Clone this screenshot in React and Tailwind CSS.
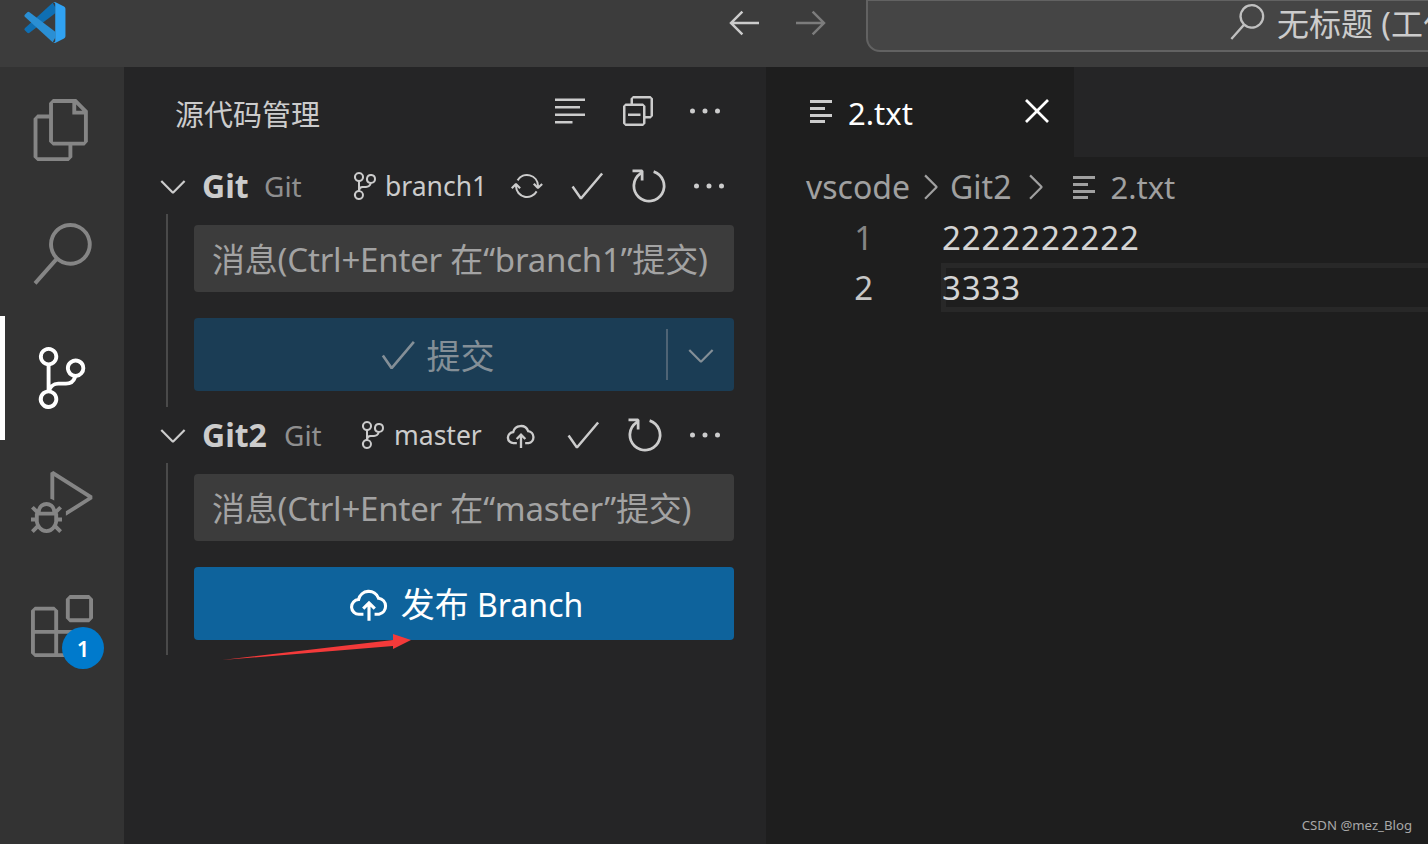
import React from 'react';

const paths = {
    check: 'M14.431 3.323l-8.47 10-.79-.036-3.35-4.77.818-.574 2.978 4.24 8.051-9.506.764.646z',
    chevronDown: 'M7.976 10.072l4.357-4.357.62.618L8.285 11h-.618L3 6.333l.619-.618 4.357 4.357z',
    chevronRight: 'M10.072 8.024L5.715 3.667l.618-.62L11 7.716v.618L6.333 13l-.618-.619 4.357-4.357z',
    close: 'M8 8.707l3.646 3.647.708-.707L8.707 8l3.647-3.646-.707-.708L8 7.293 4.354 3.646l-.707.708L7.293 8l-3.646 3.646.707.708L8 8.707z',
    dots: 'M4 8a1 1 0 1 1-2 0 1 1 0 0 1 2 0zm5 0a1 1 0 1 1-2 0 1 1 0 0 1 2 0zm5 0a1 1 0 1 1-2 0 1 1 0 0 1 2 0z',
    refresh: 'M4.681 3H2V2h3.5l.5.5V6H5V4a5 5 0 1 0 4.53-.761l.302-.954A6 6 0 1 1 4.681 3z',
    sync: 'M2.006 8.267L.78 9.5 0 8.73l2.09-2.07.76.01 2.09 2.12-.76.76-1.167-1.18a5 5 0 0 0 9.4 1.983l.813.597a6 6 0 0 1-11.22-2.683zm10.99-.466L11.76 6.55l-.76.76 2.09 2.11.76.01 2.09-2.07-.75-.76-1.194 1.18a6 6 0 0 0-11.11-2.92l.81.594a5 5 0 0 1 9.3 2.346z',
    branch: 'M13 4.5a2.5 2.5 0 1 0-3.21 2.4 2 2 0 0 1-1.79 1.1H6a2.5 2.5 0 0 0-1 .22V5.95a2.5 2.5 0 1 0-1 0v4.1a2.5 2.5 0 1 0 1.01.02A1.5 1.5 0 0 1 6.5 9H8a3 3 0 0 0 2.82-2.07A2.5 2.5 0 0 0 13 4.5zM3 3.5a1.5 1.5 0 1 1 3 0 1.5 1.5 0 0 1-3 0zm3 9a1.5 1.5 0 1 1-3 0 1.5 1.5 0 0 1 3 0zm4.5-6.5a1.5 1.5 0 1 1 0-3 1.5 1.5 0 0 1 0 3z',
    collapse: 'M9 9H4v1h5V9zM5 3l1-1h7l1 1v7l-1 1h-2v2l-1 1H3l-1-1V6l1-1h2V3zm1 2h4l1 1v4h2V3H6v2zm4 1H3v7h7V6z',
    lines: 'M2 3h12v1H2zM2 6h10v1H2zM2 9h12v1H2zM2 12h7v1H2z',
    textFile: 'M1 1h22v3H1zM1 8h15v3H1zM1 15h22v3H1zM1 21h15v3H1z',
    arrowLeft: 'M7 3.1 2.1 8 7 12.9l.7-.7L4 8.5h10v-1H4l3.7-3.7z',
    arrowRight: 'M9 3.1 13.9 8 9 12.9l-.7-.7L12 8.5H2v-1h10L8.3 3.8z',
};

const bar = {
    files: 'M17.5 0h-9L7 1.5V6H2.5L1 7.5v15.07L2.5 24h12.07L16 22.57V18h4.7l1.3-1.43V4.5L17.5 0zm0 2.12l2.38 2.38H17.5V2.12zm-3 20.38h-12v-15H7v9.07L8.5 18h6v4.5zm6-6h-12v-15H16V6h4.5v10.5z',
    search: 'M15.25 0a8.25 8.25 0 0 0-6.18 13.72L1 22.88l1.12 1 8.05-9.12A8.251 8.251 0 1 0 15.25.01V0zm0 15a6.75 6.75 0 1 1 0-13.5 6.75 6.75 0 0 1 0 13.5z',
    scm: 'M21.007 8.222A3.738 3.738 0 0 0 15.045 5.2a3.737 3.737 0 0 0 1.156 6.583 2.988 2.988 0 0 1-2.668 1.67h-2.99a4.456 4.456 0 0 0-2.989 1.165V7.4a3.737 3.737 0 1 0-1.494 0v9.117a3.776 3.776 0 1 0 1.816.099 2.99 2.99 0 0 1 2.668-1.667h2.99a4.484 4.484 0 0 0 4.223-3.039 3.736 3.736 0 0 0 3.25-3.687zM4.565 3.738a2.242 2.242 0 1 1 4.484 0 2.242 2.242 0 0 1-4.484 0zm4.484 16.441a2.242 2.242 0 1 1-4.484 0 2.242 2.242 0 0 1 4.484 0zm8.221-9.715a2.242 2.242 0 1 1 0-4.485 2.242 2.242 0 0 1 0 4.485z',
    debug: 'M10.94 13.5l-1.32 1.32a3.73 3.73 0 0 0-7.24 0L1.06 13.5 0 14.56l1.72 1.72-.22.22V18H0v1.5h1.5v.08c.077.489.214.966.41 1.42L0 22.94 1.06 24l1.65-1.65A4.308 4.308 0 0 0 6 24a4.31 4.31 0 0 0 3.29-1.65L10.94 24 12 22.94 10.09 21c.198-.464.336-.951.41-1.45v-.05H12V18h-1.5v-1.5l-.22-.22L12 14.56l-1.06-1.06zM6 13.5a2.25 2.25 0 0 1 2.25 2.25h-4.5A2.25 2.25 0 0 1 6 13.5zm3 6a3.33 3.33 0 0 1-3 3 3.33 3.33 0 0 1-3-3v-2.25h6v2.25zm14.76-9.9v1.26L13.5 17.37v-1.77l8.5-5.37L9 2v9.46a5.07 5.07 0 0 0-1.5-.72V.63L8.64 0l15.12 9.6z',
    ext: 'M13.5 1.5L15 0h7.5L24 1.5V9l-1.5 1.5H15L13.5 9V1.5zm1.5 0V9h7.5V1.5H15zM0 15V6l1.5-1.5H9L10.5 6v7.5H18l1.5 1.5v7.5L18 24H1.5L0 22.5V15zm9-1.5V6H1.5v7.5H9zM9 15H1.5v7.5H9V15zm1.5 7.5H18V15h-7.5v7.5z',
};

const Icon = ({ d, className, box = 16 }) => (
    <svg viewBox={`0 0 ${box} ${box}`} className={`shrink-0 fill-current ${className}`}>
        <path fillRule="evenodd" clipRule="evenodd" d={d} />
    </svg>
);

// cloud with the arrow coming up through its bottom edge
const CloudUp = ({ className }) => (
    <svg viewBox="0 0 18 16" className={`shrink-0 fill-none stroke-current stroke-[1.4] ${className}`}>
        <path d="M6.5 12.6H4.6a3.3 3.3 0 0 1-.3-6.6 4.7 4.7 0 0 1 9-.6 3.65 3.65 0 0 1 .2 7.2h-2" />
        <path d="M9 15.5V7.6M6.4 10.1 9 7.5l2.6 2.6" />
    </svg>
);

const Logo = () => (
    <svg viewBox="0 0 100 100" className="w-[42px] h-[41px] ml-6 mt-0.5 shrink-0">
        <path fill="#0f6fb3" d="M1.4 63.6a4.2 4.2 0 0 0 0 6.2l5.5 5a4.2 4.2 0 0 0 5.3.2L75 27.3V13L68.7 2.1z" />
        <path fill="#2a8fd4" d="M1.4 36.4a4.2 4.2 0 0 1 0-6.2l5.5-5a4.2 4.2 0 0 1 5.3-.2L75 72.7V87l-6.3 10.9z" />
        <path fill="#30a2f2" d="M70.9 99.3a6.2 6.2 0 0 0 4.9-.2l20.6-9.9a6.2 6.2 0 0 0 3.5-5.6V16.4a6.2 6.2 0 0 0-3.5-5.6L75.8.9a6.2 6.2 0 0 0-7.1 1.2c2.3-2.3 6.3-.7 6.3 2.6v90.6c0 3.3-4 4.9-6.3 2.6.7.6 1.4 1.1 2.2 1.4z" />
    </svg>
);

const ActivityItem = ({ d, active, children }) => (
    <div className={`relative h-[124px] flex items-center justify-center ${active ? 'text-white' : 'text-[#858585]'}`}>
        {active && <div className="absolute left-0 top-0 bottom-0 w-[5px] bg-white" />}
        <Icon d={d} box={24} className="w-[62px] h-[62px]" />
        {children}
    </div>
);

const ActivityBar = () => (
    <div className="w-[124px] shrink-0 bg-[#333333] pt-px">
        <ActivityItem d={bar.files} />
        <ActivityItem d={bar.search} />
        <ActivityItem d={bar.scm} active />
        <ActivityItem d={bar.debug} />
        <ActivityItem d={bar.ext}>
            <div className="absolute left-[62px] top-[63px] w-[42px] h-[42px] rounded-full bg-[#007acc] text-white text-[22px] font-semibold flex items-center justify-center">1</div>
        </ActivityItem>
    </div>
);

const RepoRow = ({ name, nameW, gapW, branch, branchW, statusIcon, checkL }) => (
    <div className="h-14 flex items-center text-[#cccccc]">
        <Icon d={paths.chevronDown} className="w-10 h-10 ml-[29px]" />
        <span className={`ml-[9px] text-[32px] font-bold ${nameW}`}>{name}</span>
        <span className={`text-[28px] text-[#8f8f8f] ${gapW}`}>Git</span>
        <Icon d={paths.branch} className="w-8 h-8" />
        <span className={`text-[26.5px] leading-none ${branchW}`}>{branch}</span>
        {statusIcon}
        <Icon d={paths.check} className={`w-10 h-10 ${checkL}`} />
        <Icon d={paths.refresh} className="w-11 h-11 ml-5" />
        <Icon d={paths.dots} className="w-10 h-10 ml-[18px]" />
    </div>
);

const MessageInput = ({ text }) => (
    <div className="h-[67px] rounded bg-[#3c3c3c] pl-[18px] pt-[2px] flex items-center text-[#a3a3a3] text-[33px] tracking-[-0.2px] whitespace-nowrap">
        {text}
    </div>
);

const Sidebar = () => (
    <div className="w-[642px] shrink-0 bg-[#252526] relative">
        <div className="h-[91px] flex items-center text-[#cccccc]">
            <span className="ml-[51px] text-[29px] leading-none mt-1">源代码管理</span>
            <Icon d={paths.lines} className="w-10 h-10 ml-[230px] -mt-1" />
            <Icon d={paths.collapse} className="w-10 h-10 ml-[28px] -mt-1" />
            <Icon d={paths.dots} className="w-10 h-10 ml-[27px] -mt-1" />
        </div>

        <RepoRow
            name="Git"
            nameW="w-[62px]"
            gapW="w-[86px]"
            branch="branch1"
            branchW="ml-[3px] w-[103px]"
            statusIcon={<Icon d={paths.sync} className="w-8 h-8 ml-[23px]" />}
            checkL="ml-6"
        />
        <div className="ml-[42px] mr-[32px] border-l-2 border-[#4a4a4a] pl-[26px] pt-[11px] h-[193px]">
            <MessageInput text="消息(Ctrl+Enter 在“branch1”提交)" />
            <div className="mt-[26px] h-[73px] rounded bg-[#1b3d55] flex items-center text-[#848f97]">
                <div className="flex-1 flex items-center justify-center gap-2 pl-[11px] text-[34px]">
                    <Icon d={paths.check} className="w-[42px] h-[42px]" />
                    <span className="pt-[3px]">提交</span>
                </div>
                <div className="w-[2px] h-[51px] bg-[#4f6475]" />
                <Icon d={paths.chevronDown} className="w-10 h-10 mx-[13px]" />
            </div>
        </div>

        <RepoRow
            name="Git2"
            nameW="w-[82px]"
            gapW="w-[74px]"
            branch="master"
            branchW="ml-[4px] w-[87px]"
            statusIcon={<CloudUp className="w-[30px] h-[27px] ml-[25px]" />}
            checkL="ml-[27px]"
        />
        <div className="ml-[42px] mr-[32px] border-l-2 border-[#4a4a4a] pl-[26px] pt-[11px] h-[192px]">
            <MessageInput text="消息(Ctrl+Enter 在“master”提交)" />
            <div className="mt-[26px] h-[73px] rounded bg-[#0e639c] flex items-center justify-center gap-3 pl-1 text-white text-[32px]">
                <CloudUp className="w-10 h-9" />
                <span className="pt-px"><span className="text-[34px]">发布</span> Branch</span>
            </div>
        </div>

        {/* annotation arrow */}
        <svg viewBox="0 0 200 30" className="absolute left-[97px] top-[564px] w-[200px] h-[30px] fill-[#f43a3a]">
            <path d="M1 29 L172 9 L172 3 L190 9 L172 18 L172 15 Z" />
        </svg>
    </div>
);

const TitleBar = () => (
    <div className="h-[67px] shrink-0 bg-[#3c3c3c] flex overflow-hidden">
        <Logo />
        <div className="ml-[53px] mt-[11px] w-[42px] h-6 flex flex-col justify-between">
            <div className="h-[3px] bg-[#cccccc]" />
            <div className="h-[3px] bg-[#cccccc]" />
            <div className="h-[3px] bg-[#cccccc]" />
        </div>
        <Icon d={paths.arrowLeft} className="w-10 h-10 ml-[605px] mt-[3px] text-[#cccccc]" />
        <Icon d={paths.arrowRight} className="w-10 h-10 ml-[27px] mt-[3px] text-[#7c7c7c]" />
        <div className="ml-[35px] w-[800px] h-[53px] -mt-[1px] shrink-0 rounded-b-[14px] bg-[#454545] border-2 border-[#626262] flex items-start">
            <Icon d={bar.search} box={24} className="w-[36px] h-[36px] ml-[361px] mt-[3px] text-[#c0c0c0]" />
            <span className="ml-[12px] text-[32px] leading-none mt-[7px] text-[#cccccc] whitespace-nowrap">无标题 (工作区)</span>
        </div>
    </div>
);

const Editor = () => (
    <div className="flex-1 min-w-0 bg-[#1e1e1e] relative">
        <div className="h-[90px] bg-[#252526]">
            <div className="w-[308px] h-full bg-[#1e1e1e] flex items-center text-white">
                <Icon d={paths.textFile} box={24} className="w-6 h-6 ml-[43px] -mt-[2px] text-[#cccccc]" />
                <span className="ml-[15px] text-[31px] leading-none mt-[2px]">2.txt</span>
                <Icon d={paths.close} className="w-11 h-11 ml-[102px] -mt-[2px]" />
            </div>
        </div>
        <div className="h-[60px] flex items-center text-[#a0a0a0] text-[32px] leading-none pl-[40px]">
            <span>vscode</span>
            <Icon d={paths.chevronRight} className="w-10 h-10" />
            <span>Git2</span>
            <Icon d={paths.chevronRight} className="w-10 h-10 ml-1" />
            <Icon d={paths.textFile} box={24} className="w-6 h-6 ml-[17px]" />
            <span className="ml-[14px] text-[31px]">2.txt</span>
        </div>
        <div className="text-[33px] tracking-[0.9px] text-[#d4d4d4] leading-[50px] -mt-[4px]">
            <div className="flex h-[50px]">
                <span className="w-[108px] text-right text-[#858585]">1</span>
                <span className="ml-[68px]">2222222222</span>
            </div>
            <div className="flex h-[50px]">
                <span className="w-[108px] text-right text-[#c6c6c6]">2</span>
                <div className="ml-[67px] flex-1 border-[5px] border-r-0 border-[#282828] h-[49px] leading-[40px]">
                    <span className="-ml-1">3333</span>
                </div>
            </div>
        </div>
        <div className="absolute right-4 bottom-2 text-[13.2px] text-[#a8a8a8]">CSDN @mez_Blog</div>
    </div>
);

export default function App() {
    return (
        <div className="w-[1428px] h-[844px] overflow-hidden flex flex-col bg-[#1e1e1e] font-['Noto_Sans','Noto_Sans_CJK_SC',sans-serif]">
            <TitleBar />
            <div className="flex-1 flex min-h-0">
                <ActivityBar />
                <Sidebar />
                <Editor />
            </div>
        </div>
    );
}
